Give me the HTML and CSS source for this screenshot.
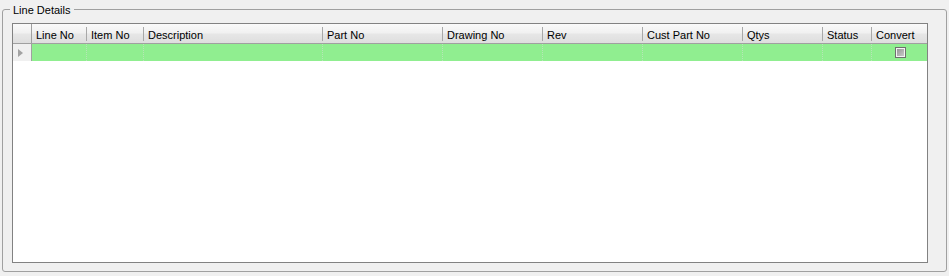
FILE: index.html
```html
<!DOCTYPE html>
<html>
<head>
<meta charset="utf-8">
<link rel="stylesheet" href="styles.css">
</head>
<body>
<div class="group">
  <div class="legend">Line Details</div>
  <div class="grid">
    <div class="row head">
      <div class="cell rh"></div>
      <div class="cell c1">Line No</div>
      <div class="cell c2">Item No</div>
      <div class="cell c3">Description</div>
      <div class="cell c4">Part No</div>
      <div class="cell c5">Drawing No</div>
      <div class="cell c6">Rev</div>
      <div class="cell c7">Cust Part No</div>
      <div class="cell c8">Qtys</div>
      <div class="cell c9">Status</div>
      <div class="cell c10 last">Convert</div>
    </div>
    <div class="row data">
      <div class="cell rh"><span class="arrow"></span></div>
      <div class="cell c1"></div>
      <div class="cell c2"></div>
      <div class="cell c3"></div>
      <div class="cell c4"></div>
      <div class="cell c5"></div>
      <div class="cell c6"></div>
      <div class="cell c7"></div>
      <div class="cell c8"></div>
      <div class="cell c9"></div>
      <div class="cell c10 last"><span class="check"></span></div>
    </div>
  </div>
</div>
</body>
</html>
```
FILE: styles.css
```css
html, body {
  margin: 0;
  padding: 0;
  background: #f0f0f0;
}
body {
  font-family: "Liberation Sans", Arial, sans-serif;
  font-size: 11px;
  color: #000;
  width: 949px;
  height: 276px;
  overflow: hidden;
}
.group {
  position: relative;
  margin: 9px 2px 0 2px;
  border: 1px solid #a0a0a0;
  border-radius: 3px;
  padding: 13px 18px 8px 9px;
  width: 916px;
  height: 240px;
}
.legend {
  position: absolute;
  top: -6px;
  left: 7px;
  padding: 0 4px 0 3px;
  line-height: 13px;
  background: #f0f0f0;
  color: #000;
}
.grid {
  width: 914px;
  height: 238px;
  border: 1px solid #828282;
  background: #fff;
}
.row {
  display: flex;
}
.cell {
  box-sizing: border-box;
  flex: none;
  position: relative;
  white-space: nowrap;
  overflow: hidden;
}
.rh { width: 19px; }
.c1 { width: 55px; }
.c2 { width: 57px; }
.c3 { width: 179px; }
.c4 { width: 120px; }
.c5 { width: 100px; }
.c6 { width: 100px; }
.c7 { width: 100px; }
.c8 { width: 80px; }
.c9 { width: 49px; }
.c10 { width: 55px; }

.head {
  height: 20px;
  border-bottom: 1px solid #a0a0a0;
  box-sizing: border-box;
  background: linear-gradient(#fafafa 0%, #f1f1f1 45%, #e6e6e6 55%, #dedede 100%);
}
.head .cell {
  height: 19px;
  padding: 5px 0 0 4px;
  line-height: 13px;
}
.head .cell::after {
  content: "";
  position: absolute;
  right: 0;
  top: 3px;
  bottom: 2px;
  width: 1px;
  background: #a8a8a8;
}
.head .rh {
  border-right: 1px solid #a0a0a0;
}
.head .rh::after,
.head .last::after {
  display: none;
}
.data {
  height: 17px;
}
.data .cell {
  height: 17px;
  background: #90ee90;
  border-right: 1px dotted #b6e6b6;
}
.data .rh {
  background: #f0f0f0;
  border-right: 1px solid #a0a0a0;
  display: flex;
  align-items: center;
  padding-left: 5px;
}
.data .last {
  border-right: none;
  display: flex;
  align-items: center;
  justify-content: center;
  padding-left: 2px;
}
.arrow {
  width: 0;
  height: 0;
  border-left: 5px solid #a2a2a2;
  border-top: 4.5px solid transparent;
  border-bottom: 4.5px solid transparent;
}
.check {
  box-sizing: border-box;
  width: 11px;
  height: 11px;
  border: 1px solid #6e6e6e;
  box-shadow: inset 0 0 0 1px #f4f4f4;
  background: linear-gradient(135deg, #8e8e8e, #cfcfcf);
}
```
